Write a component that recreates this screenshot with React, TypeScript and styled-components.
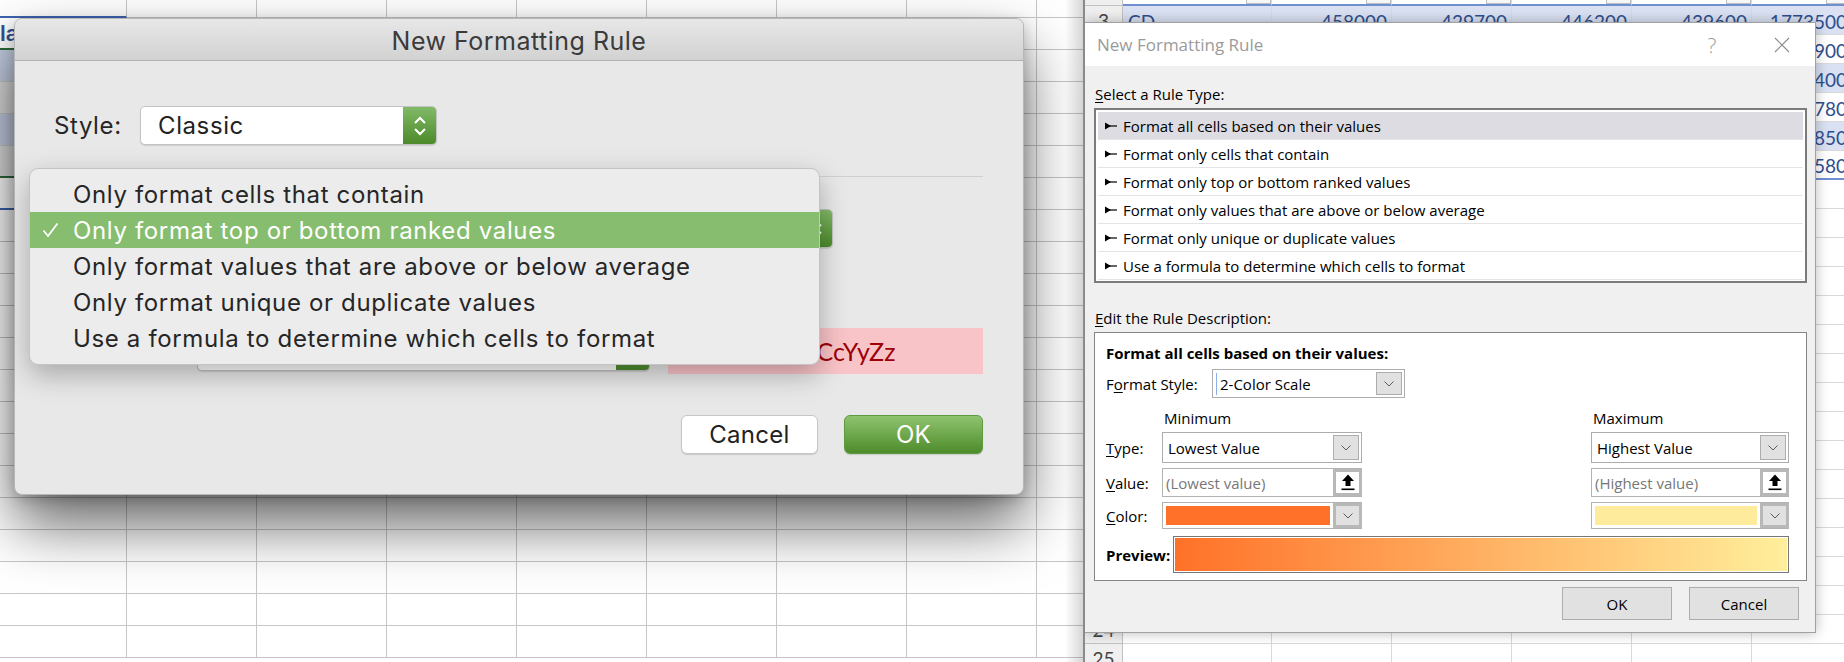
import React from 'react';
import styled, { createGlobalStyle } from 'styled-components';

const GlobalStyle = createGlobalStyle`
  html, body {
    margin: 0;
    padding: 0;
    width: 1844px;
    height: 662px;
    overflow: hidden;
    background: #fff;
  }
`;

const Page = styled.div`
  display: flex;
  width: 1844px;
  height: 662px;
  overflow: hidden;
`;

/* ---------- mac side ---------- */

const MacPane = styled.div`
  position: relative;
  width: 1083px;
  height: 662px;
  flex-shrink: 0;
  overflow: hidden;
  background: #fff;
  font-family: Inter, 'Liberation Sans', sans-serif;

  &:after {
    content: '';
    position: absolute;
    top: 0;
    right: 0;
    width: 18px;
    height: 100%;
    background: linear-gradient(90deg, rgba(0, 0, 0, 0), rgba(0, 0, 0, 0.16));
  }
`;

const Sheet = styled.div`
  display: flex;
  flex-direction: column;
`;

const SheetRow = styled.div<{ $h: number }>`
  display: flex;
  height: ${p => p.$h}px;
  flex-shrink: 0;
`;

const MacCell = styled.div<{ $w: number; $fill?: string; $line?: string }>`
  width: ${p => p.$w}px;
  flex-shrink: 0;
  box-sizing: border-box;
  border-right: 1px solid #c6c6c6;
  border-bottom: ${p => (p.$line ? `2px solid ${p.$line}` : '1px solid #c6c6c6')};
  background: ${p => p.$fill || 'transparent'};
  color: #34508f;
  font-size: 22px;
  font-weight: 600;
  line-height: 30px;
  white-space: nowrap;
  overflow: hidden;
`;

const MacDialog = styled.div`
  position: absolute;
  left: 14px;
  top: 18px;
  width: 1010px;
  height: 477px;
  box-sizing: border-box;
  background: #e8e8e8;
  border: 1px solid #b7b7b7;
  border-radius: 8px;
  overflow: hidden;
  box-shadow: 0 30px 60px rgba(0, 0, 0, 0.6), 0 4px 14px rgba(0, 0, 0, 0.2);
`;

const MacTitleBar = styled.div`
  height: 42px;
  border-bottom: 1px solid #b1b1b1;
  background: linear-gradient(#e7e7e7, #d2d2d2);
  display: flex;
  align-items: center;
  justify-content: center;
  font-size: 25px;
  letter-spacing: 0.5px;
  color: #3b3b3b;
  padding-top: 2px;
  box-sizing: border-box;
`;

const MacBody = styled.div`
  padding: 45px 40px 0 39px;
  display: flex;
  flex-direction: column;
  font-size: 24px;
  letter-spacing: 0.6px;
`;

const MacRow = styled.div<{ $top?: number; $h: number }>`
  display: flex;
  align-items: center;
  height: ${p => p.$h}px;
  margin-top: ${p => p.$top || 0}px;
`;

const MacLabel = styled.div`
  width: 86px;
  color: #262626;
`;

const Popup = styled.div<{ $w: number; $h: number; $left?: number }>`
  display: flex;
  width: ${p => p.$w}px;
  height: ${p => p.$h}px;
  margin-left: ${p => p.$left || 0}px;
  box-sizing: border-box;
  background: #fff;
  border: 1px solid #c3c3c3;
  border-radius: 5px;
  box-shadow: 0 1px 1px rgba(0, 0, 0, 0.12);
  overflow: hidden;
  flex-shrink: 0;
`;

const PopupText = styled.div`
  flex: 1;
  display: flex;
  align-items: center;
  padding-left: 17px;
  color: #222;
  white-space: nowrap;
  overflow: hidden;
`;

const Stepper = styled.div`
  width: 33px;
  background: linear-gradient(#82ba67, #4b8a2b);
  display: flex;
  align-items: center;
  justify-content: center;
`;

const Separator = styled.div`
  height: 1px;
  margin-top: 31px;
  background: #d0d0d0;
`;

const PreviewSwatch = styled.div`
  width: 315px;
  height: 46px;
  margin-left: 18px;
  background: #f9c4c8;
  color: #9c0006;
  font-family: Lato, 'Liberation Sans', sans-serif;
  font-size: 25px;
  letter-spacing: 0;
  display: flex;
  align-items: center;
  justify-content: center;
  padding-left: 2px;
`;

const MacButtons = styled.div`
  display: flex;
  justify-content: flex-end;
  gap: 26px;
  margin-top: 41px;
`;

const MacButton = styled.div<{ $primary?: boolean; $w: number }>`
  width: ${p => p.$w}px;
  height: 39px;
  box-sizing: border-box;
  border-radius: 6px;
  display: flex;
  align-items: center;
  justify-content: center;
  letter-spacing: 0.3px;
  color: ${p => (p.$primary ? '#fff' : '#222')};
  background: ${p => (p.$primary ? 'linear-gradient(#8fc36f, #4d8c2b)' : '#fff')};
  border: 1px solid ${p => (p.$primary ? '#5e9a3e' : '#c6c6c6')};
  box-shadow: 0 1px 1px rgba(0, 0, 0, 0.14);
`;

const Menu = styled.div`
  position: absolute;
  left: 29px;
  top: 168px;
  width: 791px;
  height: 197px;
  box-sizing: border-box;
  padding: 7px 0 9px;
  background: #ececec;
  border: 1px solid #c4c4c4;
  border-radius: 9px;
  overflow: hidden;
  box-shadow: 0 10px 28px rgba(0, 0, 0, 0.28);
  font-size: 24px;
  letter-spacing: 0.65px;
`;

const MenuItem = styled.div<{ $active?: boolean }>`
  height: 36px;
  display: flex;
  align-items: center;
  color: ${p => (p.$active ? '#fff' : '#262626')};
  background: ${p => (p.$active ? '#86bd6e' : 'transparent')};
  white-space: nowrap;
`;

const CheckSlot = styled.div`
  width: 43px;
  display: flex;
  justify-content: flex-end;
  padding-right: 14px;
  box-sizing: border-box;
`;

/* ---------- windows side ---------- */

const WinPane = styled.div`
  position: relative;
  width: 761px;
  height: 662px;
  flex-shrink: 0;
  box-sizing: border-box;
  overflow: hidden;
  border-left: 2px solid #8a8a8a;
  background: #fff;
  font-family: 'Open Sans', 'Liberation Sans', sans-serif;
`;

const WinCell = styled.div<{ $w: number; $fill?: string; $line?: string; $head?: boolean; $left?: boolean }>`
  width: ${p => p.$w}px;
  flex-shrink: 0;
  box-sizing: border-box;
  position: relative;
  display: flex;
  align-items: center;
  justify-content: ${p => (p.$head ? 'center' : p.$left ? 'flex-start' : 'flex-end')};
  padding: ${p => (p.$head ? '0' : '2px 4px 0 5px')};
  border-right: 1px solid ${p => (p.$head ? '#c2c2c2' : '#d9d9d9')};
  border-bottom: ${p => (p.$line ? `2px solid ${p.$line}` : p.$head ? '1px solid #c2c2c2' : '1px solid #d9d9d9')};
  background: ${p => (p.$head ? '#efefef' : p.$fill || 'transparent')};
  color: ${p => (p.$head ? '#444' : '#2f4e8e')};
  font-family: Lato, 'Liberation Sans', sans-serif;
  font-size: 19px;
  white-space: nowrap;
  overflow: hidden;
`;

const FilterBtn = styled.div`
  position: absolute;
  right: 0;
  bottom: 0;
  width: 25px;
  height: 10px;
  box-sizing: border-box;
  border: 1px solid #bdbdbd;
  background: #f7f7f7;
`;

const WinDialog = styled.div`
  position: absolute;
  left: -1px;
  top: 22px;
  width: 732px;
  height: 611px;
  box-sizing: border-box;
  background: #f0f0f0;
  border: 1px solid #a0a0a0;
  box-shadow: 0 0 12px rgba(0, 0, 0, 0.28);
  display: flex;
  flex-direction: column;
  color: #000;
  font-size: 15px;
`;

const WinTitleBar = styled.div`
  height: 43px;
  flex-shrink: 0;
  background: #fff;
  display: flex;
  align-items: center;
  padding: 0 8px 0 12px;
`;

const WinTitle = styled.div`
  flex: 1;
  font-size: 17px;
  color: #9b9b9b;
`;

const TitleIcon = styled.div<{ $w: number }>`
  width: ${p => p.$w}px;
  display: flex;
  justify-content: center;
  align-items: center;
  font-size: 21px;
  font-weight: 300;
  color: #9a9a9a;
`;

const WinBody = styled.div`
  padding: 0 8px 0 9px;
  display: flex;
  flex-direction: column;
`;

const WinCaption = styled.div<{ $top: number }>`
  margin-top: ${p => p.$top}px;
  height: 20px;
  line-height: 20px;
  padding-left: 1px;
`;

const ListBox = styled.div`
  margin-top: 4px;
  height: 175px;
  box-sizing: border-box;
  border: 2px solid #7b7b7b;
  background: #fff;
  padding: 2px;
`;

const ListRow = styled.div<{ $active?: boolean }>`
  height: 28px;
  box-sizing: border-box;
  border-bottom: 1px solid #e4e4e4;
  display: flex;
  align-items: center;
  gap: 6px;
  padding-left: 7px;
  background: ${p => (p.$active ? '#dcdce2' : 'transparent')};
`;

const DescBox = styled.div`
  margin-top: 4px;
  height: 249px;
  box-sizing: border-box;
  border: 1px solid #858585;
  background: #fff;
  padding: 10px 17px 0 11px;
  display: flex;
  flex-direction: column;
`;

const BoldLine = styled.div`
  height: 20px;
  line-height: 20px;
  font-weight: 700;
`;

const DescRow = styled.div<{ $top: number; $h: number }>`
  display: grid;
  grid-template-columns: 56px 200px 1fr 198px;
  align-items: stretch;
  margin-top: ${p => p.$top}px;
  height: ${p => p.$h}px;
`;

const FlexRow = styled.div<{ $top: number; $h: number }>`
  display: flex;
  align-items: stretch;
  margin-top: ${p => p.$top}px;
  height: ${p => p.$h}px;
`;

const RowLabel = styled.div<{ $w?: number; $bold?: boolean }>`
  display: flex;
  align-items: center;
  ${p => (p.$w ? `width: ${p.$w}px; flex-shrink: 0;` : '')}
  font-weight: ${p => (p.$bold ? 700 : 400)};
`;

const HeadLabel = styled.div<{ $col: number }>`
  grid-column: ${p => p.$col};
  display: flex;
  align-items: center;
  padding-left: 2px;
`;

const WinSelect = styled.div<{ $col?: number; $w?: number }>`
  ${p => (p.$col ? `grid-column: ${p.$col};` : '')}
  ${p => (p.$w ? `width: ${p.$w}px;` : '')}
  display: flex;
  box-sizing: border-box;
  border: 1px solid #adadad;
  background: #fff;
  padding: 2px;
`;

const WinSelectText = styled.div<{ $muted?: boolean }>`
  flex: 1;
  display: flex;
  align-items: center;
  padding-left: 3px;
  color: ${p => (p.$muted ? '#777' : '#000')};
  white-space: nowrap;
`;

const Caret = styled.span`
  width: 1px;
  height: 22px;
  background: #8ab0e6;
  margin-right: 3px;
  margin-left: -2px;
`;

const DropBtn = styled.div`
  width: 26px;
  box-sizing: border-box;
  background: #e1e1e1;
  border: 1px solid #adadad;
  display: flex;
  align-items: center;
  justify-content: center;
`;

const InputBox = styled.div<{ $col: number }>`
  grid-column: ${p => p.$col};
  display: flex;
  box-sizing: border-box;
  border: 1px solid #b3b3b3;
  border-right: none;
  background: #fff;
`;

const PickBtn = styled.div<{ $gray?: boolean }>`
  width: 29px;
  box-sizing: border-box;
  border: 3px solid #b8b8b8;
  background: ${p => (p.$gray ? '#e1e1e1' : '#fff')};
  display: flex;
  align-items: center;
  justify-content: center;
`;

const ColorFill = styled.div<{ $color: string }>`
  flex: 1;
  margin: 3px;
  background: ${p => p.$color};
`;

const PreviewBox = styled.div`
  width: 617px;
  box-sizing: border-box;
  border: 1px solid #777;
  padding: 1px;
  background: #fff;
`;

const Gradient = styled.div`
  height: 100%;
  background: linear-gradient(90deg, #ff7128, #ffef9c);
`;

const WinButtons = styled.div`
  display: flex;
  justify-content: flex-end;
  gap: 17px;
  margin-top: 6px;
  padding-right: 8px;
`;

const WinButton = styled.div`
  width: 110px;
  height: 33px;
  box-sizing: border-box;
  background: #e1e1e1;
  border: 1px solid #adadad;
  display: flex;
  align-items: center;
  justify-content: center;
`;

const U = styled.span`
  text-decoration: underline;
  text-underline-offset: 2px;
`;

/* ---------- icons ---------- */

const StepperIcon = () => (
  <svg width="16" height="24" viewBox="0 0 16 24">
    <polyline points="3,9 8,4 13,9" fill="none" stroke="#fff" strokeWidth="2" />
    <polyline points="3,15 8,20 13,15" fill="none" stroke="#fff" strokeWidth="2" />
  </svg>
);

const Check = () => (
  <svg width="17" height="16" viewBox="0 0 17 16">
    <polyline points="1.5,8.5 6,14 15.5,1.5" fill="none" stroke="#fff" strokeWidth="1.8" />
  </svg>
);

const Bullet = () => (
  <svg width="12" height="8" viewBox="0 0 12 8">
    <path d="M0 0.5 L6 4 L0 7.5 Z" fill="#000" />
    <rect x="4" y="3.4" width="8" height="1.2" fill="#000" />
  </svg>
);

const Chevron = () => (
  <svg width="10" height="6" viewBox="0 0 10 6">
    <polyline points="0.5,0.5 5,5 9.5,0.5" fill="none" stroke="#5a5a5a" strokeWidth="1" />
  </svg>
);

const PickIcon = () => (
  <svg width="14" height="17" viewBox="0 0 14 17">
    <path d="M7 0.5 L13 7 H9.5 V12 H4.5 V7 H1 Z" fill="#000" />
    <rect x="0.5" y="14.5" width="13" height="1.6" fill="#000" />
  </svg>
);

const CloseIcon = () => (
  <svg width="16" height="16" viewBox="0 0 16 16">
    <path d="M1 1 L15 15 M15 1 L1 15" stroke="#8a8a8a" strokeWidth="1.1" />
  </svg>
);

/* ---------- data ---------- */

const macCols = [127, 130, 130, 130, 130, 130, 130, 130, 130];
const macRows = Array.from({ length: 21 }, (_, i) => (i === 0 ? 18 : 32));
const macFirst: Record<number, { fill?: string; line?: string; text?: string }> = {
  0: { line: '#3d62b0' },
  1: { text: 'la', line: '#2d6a3a' },
  2: { fill: '#c4cee3' },
  3: { fill: '#dcdcdc' },
  4: { fill: '#c4cee3' },
  5: { fill: '#dcdcdc', line: '#2d6a3a' },
  6: { line: '#3d62b0' },
};

const menuItems = [
  'Only format cells that contain',
  'Only format top or bottom ranked values',
  'Only format values that are above or below average',
  'Only format unique or duplicate values',
  'Use a formula to determine which cells to format',
];

const ruleTypes = [
  'Format all cells based on their values',
  'Format only cells that contain',
  'Format only top or bottom ranked values',
  'Format only values that are above or below average',
  'Format only unique or duplicate values',
  'Use a formula to determine which cells to format',
];

const winCols = [38, 149, 120, 120, 120, 120, 100];
const winData: Record<number, string[]> = {
  3: ['CD', '458000', '429700', '446200', '439600', '1773500'],
  4: ['', '', '', '', '', '900'],
  5: ['', '', '', '', '', '400'],
  6: ['', '', '', '', '', '780'],
  7: ['', '', '', '', '', '850'],
  8: ['', '', '', '', '', '580'],
};
const winRows = Array.from({ length: 24 }, (_, i) => i + 2);
// row numbers that show outside the dialog
const shownHeads = [3, 24, 25];

const App = () => {
  return (
    <Page>
      <GlobalStyle />

      <MacPane>
        <Sheet>
          {macRows.map((h, r) => (
            <SheetRow key={r} $h={h}>
              {macCols.map((w, c) => {
                const first = c === 0 ? macFirst[r] : undefined;
                return (
                  <MacCell key={c} $w={w} $fill={first?.fill} $line={first?.line}>
                    {first?.text}
                  </MacCell>
                );
              })}
            </SheetRow>
          ))}
        </Sheet>

        <MacDialog>
          <MacTitleBar>New Formatting Rule</MacTitleBar>
          <MacBody>
            <MacRow $h={39}>
              <MacLabel>Style:</MacLabel>
              <Popup $w={297} $h={39}>
                <PopupText>Classic</PopupText>
                <Stepper><StepperIcon /></Stepper>
              </Popup>
            </MacRow>
            <Separator />
            <MacRow $top={32} $h={39}>
              <Popup $w={693} $h={39} $left={86}>
                <PopupText />
                <Stepper><StepperIcon /></Stepper>
              </Popup>
            </MacRow>
            <MacRow $top={80} $h={46}>
              <Popup $w={453} $h={40} $left={143}>
                <PopupText>Light Red Fill with Dark Red Text</PopupText>
                <Stepper><StepperIcon /></Stepper>
              </Popup>
              <PreviewSwatch>AaBbCcYyZz</PreviewSwatch>
            </MacRow>
            <MacButtons>
              <MacButton $w={137}>Cancel</MacButton>
              <MacButton $w={139} $primary>OK</MacButton>
            </MacButtons>
          </MacBody>
        </MacDialog>

        <Menu>
          {menuItems.map((item, i) => (
            <MenuItem key={item} $active={i === 1}>
              <CheckSlot>{i === 1 && <Check />}</CheckSlot>
              {item}
            </MenuItem>
          ))}
        </Menu>
      </MacPane>

      <WinPane>
        <Sheet>
          {winRows.map(n => {
            const data = winData[n];
            const filled = n === 3 || n === 5 || n === 7;
            return (
              <SheetRow key={n} $h={n === 2 ? 6 : 29}>
                {winCols.map((w, c) =>
                  c === 0 ? (
                    <WinCell key={c} $w={w} $head>
                      {shownHeads.includes(n) ? n : ''}
                    </WinCell>
                  ) : (
                    <WinCell
                      key={c}
                      $w={w}
                      $left={c === 1}
                      $fill={filled ? '#d9e1f2' : undefined}
                      $line={n === 2 || n === 8 ? '#6f8fd2' : undefined}
                    >
                      {n === 2 && <FilterBtn />}
                      {data ? data[c - 1] : ''}
                    </WinCell>
                  )
                )}
              </SheetRow>
            );
          })}
        </Sheet>

        <WinDialog>
          <WinTitleBar>
            <WinTitle>New Formatting Rule</WinTitle>
            <TitleIcon $w={30}>?</TitleIcon>
            <TitleIcon $w={30} />
            <TitleIcon $w={50}><CloseIcon /></TitleIcon>
          </WinTitleBar>
          <WinBody>
            <WinCaption $top={18}><U>S</U>elect a Rule Type:</WinCaption>
            <ListBox>
              {ruleTypes.map((t, i) => (
                <ListRow key={t} $active={i === 0}>
                  <Bullet />
                  {t}
                </ListRow>
              ))}
            </ListBox>
            <WinCaption $top={25}><U>E</U>dit the Rule Description:</WinCaption>
            <DescBox>
              <BoldLine>Format all cells based on their values:</BoldLine>
              <FlexRow $top={6} $h={29}>
                <RowLabel $w={106}>F<U>o</U>rmat Style:</RowLabel>
                <WinSelect $w={193}>
                  <WinSelectText><Caret />2-Color Scale</WinSelectText>
                  <DropBtn><Chevron /></DropBtn>
                </WinSelect>
              </FlexRow>
              <DescRow $top={10} $h={20}>
                <HeadLabel $col={2}>Minimum</HeadLabel>
                <HeadLabel $col={4}>Maximum</HeadLabel>
              </DescRow>
              <DescRow $top={4} $h={31}>
                <RowLabel><U>T</U>ype:</RowLabel>
                <WinSelect $col={2}>
                  <WinSelectText>Lowest Value</WinSelectText>
                  <DropBtn><Chevron /></DropBtn>
                </WinSelect>
                <WinSelect $col={4}>
                  <WinSelectText>Highest Value</WinSelectText>
                  <DropBtn><Chevron /></DropBtn>
                </WinSelect>
              </DescRow>
              <DescRow $top={5} $h={29}>
                <RowLabel><U>V</U>alue:</RowLabel>
                <InputBox $col={2}>
                  <WinSelectText $muted>(Lowest value)</WinSelectText>
                  <PickBtn><PickIcon /></PickBtn>
                </InputBox>
                <InputBox $col={4}>
                  <WinSelectText $muted>(Highest value)</WinSelectText>
                  <PickBtn><PickIcon /></PickBtn>
                </InputBox>
              </DescRow>
              <DescRow $top={5} $h={27}>
                <RowLabel><U>C</U>olor:</RowLabel>
                <InputBox $col={2}>
                  <ColorFill $color="#ff7128" />
                  <PickBtn $gray><Chevron /></PickBtn>
                </InputBox>
                <InputBox $col={4}>
                  <ColorFill $color="#ffeb9c" />
                  <PickBtn $gray><Chevron /></PickBtn>
                </InputBox>
              </DescRow>
              <FlexRow $top={7} $h={37}>
                <RowLabel $w={67} $bold>Preview:</RowLabel>
                <PreviewBox><Gradient /></PreviewBox>
              </FlexRow>
            </DescBox>
            <WinButtons>
              <WinButton>OK</WinButton>
              <WinButton>Cancel</WinButton>
            </WinButtons>
          </WinBody>
        </WinDialog>
      </WinPane>
    </Page>
  );
};

export default App;
